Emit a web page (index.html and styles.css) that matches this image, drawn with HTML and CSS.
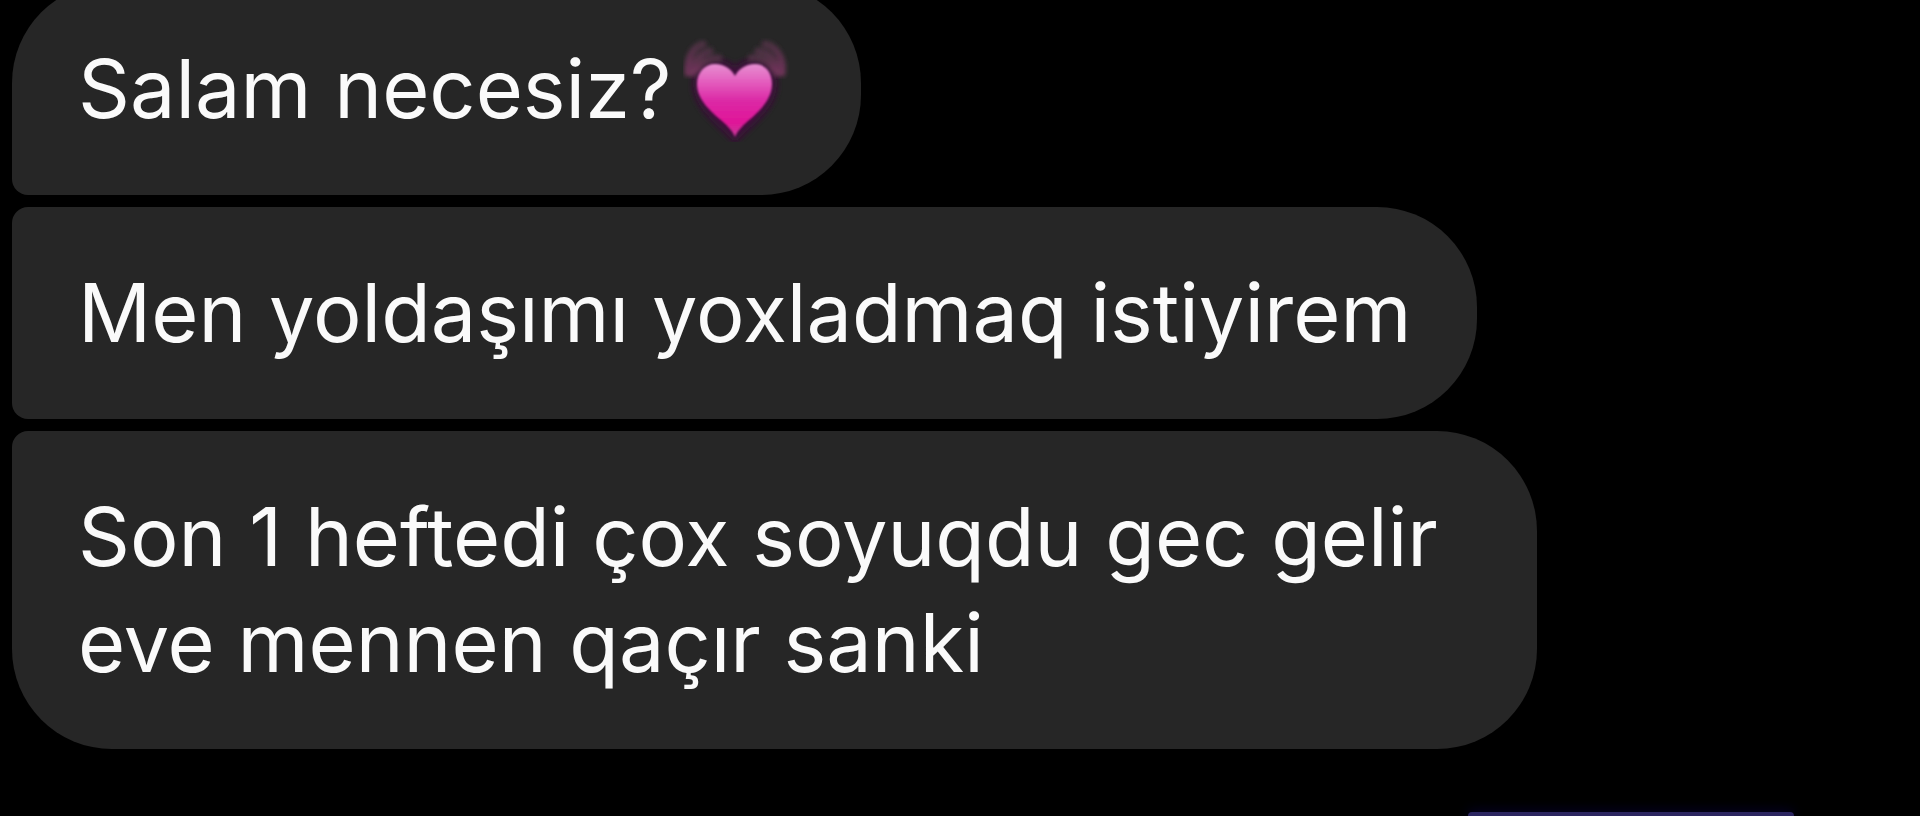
FILE: index.html
```
<!DOCTYPE html>
<html lang="az">
<head>
<meta charset="utf-8">
<meta name="viewport" content="width=device-width, initial-scale=1">
<title>Chat</title>
<link rel="stylesheet" href="styles.css">
</head>
<body>
<main class="thread">
  <p class="bubble bubble-first">Salam necesiz?<svg class="emoji" viewBox="0 -3 112 106" role="img" aria-label="Beating heart">
    <defs>
      <linearGradient id="heart" x1="0" y1="0" x2="0" y2="1">
        <stop offset="0" stop-color="#e58fd0"/>
        <stop offset="0.22" stop-color="#e463c0"/>
        <stop offset="0.5" stop-color="#dc2aa6"/>
        <stop offset="0.8" stop-color="#e01598"/>
        <stop offset="1" stop-color="#c43c98"/>
      </linearGradient>
      <linearGradient id="wave" x1="0" y1="0" x2="0" y2="1">
        <stop offset="0" stop-color="#4c3042"/>
        <stop offset="1" stop-color="#6e3459"/>
      </linearGradient>
      <filter id="soft" x="-20%" y="-20%" width="140%" height="140%"><feGaussianBlur stdDeviation="1"/></filter>
      <filter id="haze" x="-20%" y="-20%" width="140%" height="140%"><feGaussianBlur stdDeviation="2"/></filter>
      <filter id="halo" x="-30%" y="-30%" width="160%" height="160%"><feGaussianBlur stdDeviation="3"/></filter>
    </defs>
    <path d="M52 98C41 86 14 68 14 45C14 22 42 18 52 35C62 18 90 22 90 45C90 68 63 86 52 98Z" fill="#3c0a3a" stroke="#3c0a3a" stroke-width="8" filter="url(#halo)"/>
    <g fill="none" stroke="url(#wave)" stroke-width="7" stroke-linecap="round" filter="url(#haze)">
      <path d="M5 34C4 20 9 8 20 5"/>
      <path d="M10 34C11 22 17 14 27 12"/>
      <path d="M14 30C18 23 26 19 36 19"/>
      <path d="M82 5C93 7 101 18 99 34"/>
      <path d="M75 12C86 13 93 21 94 34"/>
      <path d="M68 19C78 18 87 22 91 30"/>
    </g>
    <path d="M52 98C50 93 46 88 39 82C27 72 14 60 14 45C14 33 22 25 32 25C42 25 49 31 52 37C55 31 62 25 72 25C82 25 89 33 89 45C89 60 77 72 65 82C58 88 54 93 52 98Z" fill="url(#heart)" filter="url(#soft)"/>
  </svg></p>
  <p class="bubble">Men yoldaşımı yoxladmaq istiyirem</p>
  <p class="bubble bubble-last">Son 1 heftedi çox soyuqdu gec gelir eve mennen qaçır sanki</p>
  <div class="reply"></div>
</main>
</body>
</html>
```
FILE: styles.css
```
* {
  box-sizing: border-box;
}

body {
  margin: 0;
  height: 100vh;
  overflow: hidden;
  background: #000;
  color: #fafafa;
  font-family: Inter, "Noto Sans", sans-serif;
  font-size: 81px;
  line-height: 106px;
}

.thread {
  display: flex;
  flex-direction: column;
  align-items: flex-start;
  gap: 12px;
  height: calc(100vh + 17px);
  margin-top: -17px;
  padding: 0 12px;
}

.bubble {
  flex: none;
  max-width: 1525px;
  margin: 0;
  padding: 53px 66px;
  border-radius: 16px 100px 100px 16px;
  background: #262626;
}

.bubble-first {
  border-top-left-radius: 100px;
}

.bubble-last {
  border-bottom-left-radius: 100px;
}

.emoji {
  display: inline-block;
  width: 112px;
  height: 106px;
  margin-left: 12px;
  vertical-align: top;
}

.reply {
  flex: 1;
  align-self: flex-end;
  width: 326px;
  margin: 51px 114px 0 0;
  border-radius: 4px 4px 0 0;
  background: #2b2560;
  box-shadow: 0 0 12px #0a0450;
}
```
